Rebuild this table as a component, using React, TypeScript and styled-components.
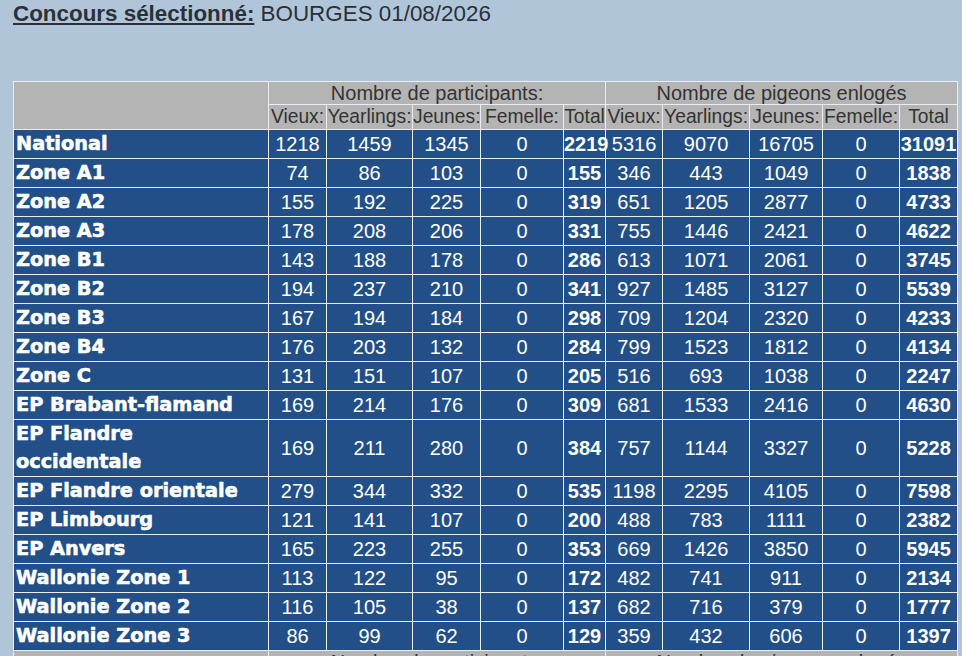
import React from "react";
import styled, { createGlobalStyle } from "styled-components";

const Global = createGlobalStyle`
  html, body { margin: 0; padding: 0; background: #b1c5d9; }
  body { font-family: "Liberation Sans", Arial, sans-serif; }
`;

const Page = styled.div`
  padding: 1px 0 0 13px;
  min-height: 656px;
  box-sizing: border-box;
`;

const Title = styled.div`
  font-size: 22.4px;
  line-height: 25px;
  color: #2a3038;
  margin-bottom: 55px;
`;

const TitleLabel = styled.span`
  font-weight: bold;
  text-decoration: underline;
  text-underline-offset: 2px;
`;

const Table = styled.table`
  border-collapse: collapse;
  table-layout: fixed;
  width: 945px;
  font-size: 20px;
  border: 1px solid #e8eef4;
`;

const HeadCell = styled.th<{ $small?: boolean }>`
  background: #b4b4b4;
  color: #333333;
  font-weight: normal;
  font-size: ${(p) => (p.$small ? "19.3px" : "20px")};
  border: 1px solid #e8eef4;
  padding: 0;
  line-height: ${(p) => (p.$small ? "24px" : "22px")};
  text-align: center;
  white-space: nowrap;
`;

const LabelCell = styled.th`
  background: #234f88;
  color: #ffffff;
  font-family: "DejaVu Sans", sans-serif;
  font-weight: bold;
  font-size: 19.3px;
  line-height: 28px;
  text-align: left;
  padding: 0 8px 0 2px;
  border: 1px solid #e8eef4;
  -webkit-text-stroke: 0.6px #ffffff;
`;

const NumCell = styled.td<{ $bold?: boolean }>`
  background: #234f88;
  color: #ffffff;
  text-align: center;
  vertical-align: middle;
  padding: 0;
  border: 1px solid #e8eef4;
  font-weight: ${(p) => (p.$bold ? "bold" : "normal")};
  white-space: nowrap;
`;

const widths = [255, 58, 86, 68, 83, 42, 57, 87, 73, 77, 58];

const rows: [string, number[]][] = [
  ["National", [1218, 1459, 1345, 0, 2219, 5316, 9070, 16705, 0, 31091]],
  ["Zone A1", [74, 86, 103, 0, 155, 346, 443, 1049, 0, 1838]],
  ["Zone A2", [155, 192, 225, 0, 319, 651, 1205, 2877, 0, 4733]],
  ["Zone A3", [178, 208, 206, 0, 331, 755, 1446, 2421, 0, 4622]],
  ["Zone B1", [143, 188, 178, 0, 286, 613, 1071, 2061, 0, 3745]],
  ["Zone B2", [194, 237, 210, 0, 341, 927, 1485, 3127, 0, 5539]],
  ["Zone B3", [167, 194, 184, 0, 298, 709, 1204, 2320, 0, 4233]],
  ["Zone B4", [176, 203, 132, 0, 284, 799, 1523, 1812, 0, 4134]],
  ["Zone C", [131, 151, 107, 0, 205, 516, 693, 1038, 0, 2247]],
  ["EP Brabant-flamand", [169, 214, 176, 0, 309, 681, 1533, 2416, 0, 4630]],
  ["EP Flandre occidentale", [169, 211, 280, 0, 384, 757, 1144, 3327, 0, 5228]],
  ["EP Flandre orientale", [279, 344, 332, 0, 535, 1198, 2295, 4105, 0, 7598]],
  ["EP Limbourg", [121, 141, 107, 0, 200, 488, 783, 1111, 0, 2382]],
  ["EP Anvers", [165, 223, 255, 0, 353, 669, 1426, 3850, 0, 5945]],
  ["Wallonie Zone 1", [113, 122, 95, 0, 172, 482, 741, 911, 0, 2134]],
  ["Wallonie Zone 2", [116, 105, 38, 0, 137, 682, 716, 379, 0, 1777]],
  ["Wallonie Zone 3", [86, 99, 62, 0, 129, 359, 432, 606, 0, 1397]],
];

const sub = ["Vieux:", "Yearlings:", "Jeunes:", "Femelle:", "Total"];

const HeaderRows = () => (
  <>
    <tr>
      <HeadCell rowSpan={2} />
      <HeadCell colSpan={5}>Nombre de participants:</HeadCell>
      <HeadCell colSpan={5}>Nombre de pigeons enlogés</HeadCell>
    </tr>
    <tr>
      {[...sub, ...sub].map((s, i) => (
        <HeadCell key={i} $small>
          {s}
        </HeadCell>
      ))}
    </tr>
  </>
);

export default function App() {
  return (
    <Page>
      <Global />
      <Title>
        <TitleLabel>Concours sélectionné:</TitleLabel> BOURGES 01/08/2026
      </Title>
      <Table>
        <colgroup>
          {widths.map((w, i) => (
            <col key={i} style={{ width: w }} />
          ))}
        </colgroup>
        <tbody>
          <HeaderRows />
          {rows.map(([label, vals]) => (
            <tr key={label}>
              <LabelCell>{label}</LabelCell>
              {vals.map((v, i) => (
                <NumCell key={i} $bold={i === 4 || i === 9}>
                  {v}
                </NumCell>
              ))}
            </tr>
          ))}
          <HeaderRows />
        </tbody>
      </Table>
    </Page>
  );
}
